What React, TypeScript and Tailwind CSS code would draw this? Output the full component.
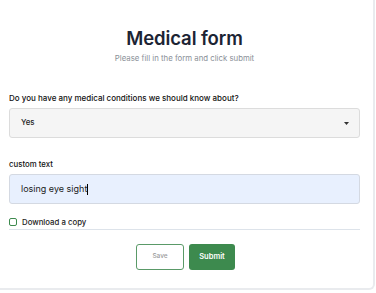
export default function App() {
  return (
    <div className="w-[376px] h-[293px] bg-white overflow-hidden font-['Inter',sans-serif]">
      <div className="w-[375px] h-[290px] bg-white border-r-2 border-b-2 border-[#e9ebee] rounded-br-md pl-[9px] pr-[13px]">
        <div className="pt-[27px] text-center">
          <h1 className="text-[18.5px] leading-[22px] font-semibold text-[#1c2434] tracking-[-0.1px]">Medical form</h1>
          <p className="mt-[4px] text-[7.8px] leading-[10px] text-[#8a8f98]">Please fill in the form and click submit</p>
        </div>

        <div className="mt-[30px]">
          <label className="block text-[8px] leading-[10px] font-medium text-[#111]">
            Do you have any medical conditions we should know about?
          </label>
          <div className="mt-[5px] h-[30px] flex items-center justify-between bg-[#f5f5f5] border border-[#dcdcdc] rounded-[3px] pl-[11px] pr-[10px]">
            <span className="text-[7.8px] font-medium text-[#222]">Yes</span>
            <svg width="5" height="3" viewBox="0 0 5 3">
              <path d="M0 0h5L2.5 3z" fill="#333" />
            </svg>
          </div>
        </div>

        <div className="mt-[21px]">
          <label className="block text-[7.8px] leading-[10px] font-medium text-[#111]">custom text</label>
          <div className="mt-[5px] h-[30px] flex items-center bg-[#e8f0fe] border border-[#d4d9e2] rounded-[3px] pl-[11px]">
            <span className="text-[9px] text-[#222]">losing eye sight</span>
            <span className="w-px h-[11px] bg-black" />
          </div>
        </div>

        <div className="mt-[13px] flex items-center gap-[5px] pb-[2px] border-b border-[#dde3ea]">
          <span className="w-[8px] h-[8px] border border-[#3d8a4e] rounded-[2px]" />
          <span className="text-[7.8px] leading-[10px] font-medium text-[#222]">Download a copy</span>
        </div>

        <div className="mt-[14px] flex justify-center gap-[5px] pl-[2px]">
          <button className="w-[48px] h-[26px] border border-[#5a9a68] rounded-[3px] bg-white text-[6.5px] font-medium text-[#9a9a9a]">
            Save
          </button>
          <button className="w-[46px] h-[26px] rounded-[3px] bg-[#3d8a4e] text-[7.5px] font-semibold text-white">
            Submit
          </button>
        </div>
      </div>
    </div>
  );
}
